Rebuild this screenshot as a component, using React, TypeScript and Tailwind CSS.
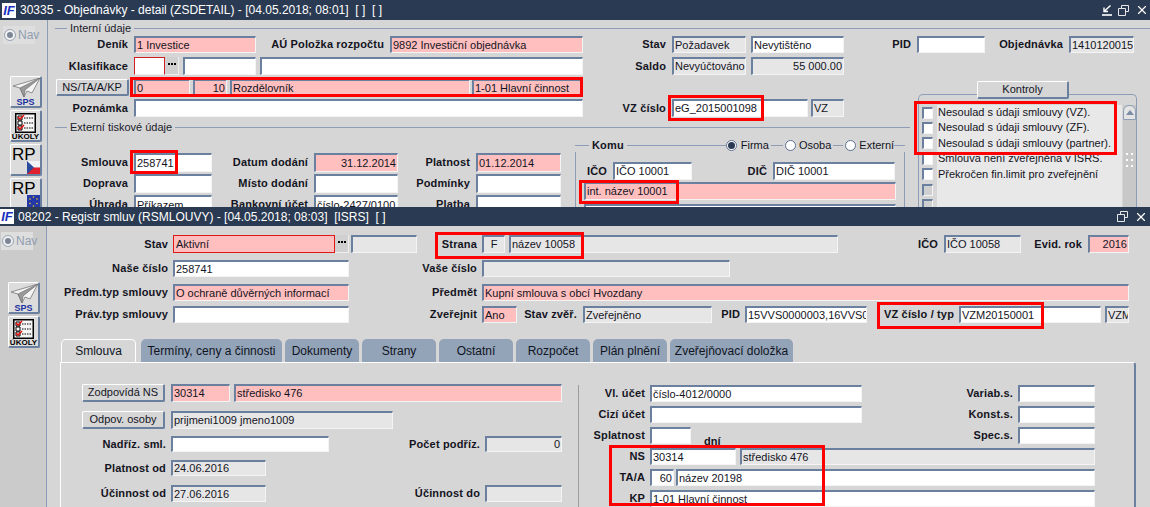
import { X } from 'lucide-react'
import type { ReactNode } from 'react'

type Tone = 'white' | 'pink' | 'grey'

const tones: Record<Tone, string> = {
  white: 'bg-white',
  pink: 'bg-[#ffbfbf]',
  grey: 'bg-[#e6e6e6]',
}

const F = ({
  className,
  tone = 'white',
  right,
  children,
}: {
  className: string
  tone?: Tone
  right?: boolean
  children?: ReactNode
}) => (
  <div
    className={`flex h-full shrink-0 items-center overflow-hidden whitespace-nowrap border-t-2 border-l-2 border-r border-b border-t-[#6b7f9f] border-l-[#6b7f9f] border-r-[#f4f4f4] border-b-[#f4f4f4] px-[1px] leading-none ${tones[tone]} ${right ? 'justify-end' : ''} ${className}`}
  >
    {children}
  </div>
)

const L = ({ className, tight, children }: { className: string; tight?: boolean; children: ReactNode }) => (
  <div className={`shrink-0 whitespace-nowrap text-right font-bold tracking-[0.15px] ${tight ? 'pr-[5px]' : 'pr-[6px]'} ${className}`}>{children}</div>
)

const Btn = ({ className, children }: { className: string; children: ReactNode }) => (
  <div
    className={`flex h-full shrink-0 items-center justify-center rounded-[2px] border-t border-l border-r-2 border-b-2 border-t-white border-l-white border-r-[#6b7f9f] border-b-[#6b7f9f] bg-[#d6d6d6] ${className}`}
  >
    {children}
  </div>
)

const Dots = () => (
  <div className="flex h-full w-[14px] shrink-0 items-center justify-center gap-px border-r border-b border-[#eee] bg-[#d0d0d0] pb-[3px]">
    <i className="size-[2px] bg-black" />
    <i className="size-[2px] bg-black" />
    <i className="size-[2px] bg-black" />
  </div>
)

const Logo = ({ className }: { className: string }) => (
  <div
    className={`flex h-[15px] w-[14px] shrink-0 items-center justify-center bg-white text-[13px] font-bold italic leading-none text-[#1a2fc0] ${className}`}
  >
    IF
  </div>
)

const Title = ({ className, logo, text, controls }: { className: string; logo: string; text: string; controls: ReactNode }) => (
  <div className={`flex shrink-0 items-center bg-[#2a3a52] text-white ${className}`}>
    <Logo className={logo} />
    <div className="ml-[4px] flex-1 whitespace-pre text-[12px] leading-none">{text}</div>
    {controls}
  </div>
)

const Restore = () => (
  <svg width="11" height="11" viewBox="0 0 11 11" fill="none" stroke="#e8e8e8">
    <path d="M3.5 3V.5h7v6H8" />
    <path d="M.5 3.5h7v7h-7z" />
  </svg>
)

const Minimize = () => (
  <svg width="10" height="11" viewBox="0 0 10 11" fill="none" stroke="#fff">
    <path d="M8.5 .5 2 6.5M2 2.5v4h4" strokeWidth="1.4" />
    <path d="M0 10h10" strokeWidth="1.6" />
  </svg>
)

const Nav = () => (
  <div className="flex h-[18px] w-[32px] items-center gap-[3px] bg-[#dedede] pl-[2px]">
    <span className="size-[10px] shrink-0 rounded-full border-2 border-[#f2f2f2] bg-[#7c8696] outline outline-1 outline-[#9aa5b5]" />
    <span className="text-[12px] leading-none text-[#8f9db0]">Nav</span>
  </div>
)

const Tile = ({ children }: { children: ReactNode }) => (
  <div className="relative h-[32px] w-[32px] shrink-0 overflow-hidden rounded-[2px] border-t border-l border-r-2 border-b-2 border-t-white border-l-white border-r-[#6b7f9f] border-b-[#6b7f9f] bg-[#dcdcdc]">
    {children}
  </div>
)

const Sps = () => (
  <Tile>
    <svg className="mx-auto mt-px" width="28" height="20" viewBox="0 0 28 20">
      <path d="M28 0 1 8l7 2 4 9 3-6 5 2z" fill="#f4f4f4" stroke="#777" strokeWidth="0.8" />
      <path d="M28 0 8 10l4 9 1-7z" fill="#9a9a9a" stroke="#666" strokeWidth="0.6" />
    </svg>
    <div className="text-center text-[9px] font-bold leading-[9px] text-[#1a2fa0]">SPS</div>
  </Tile>
)

const Ukoly = () => (
  <Tile>
    <svg className="mx-auto mt-[2px]" width="21" height="20" viewBox="0 0 21 20">
      <rect x="0.75" y="0.75" width="19.5" height="18.5" fill="#f6f6f6" stroke="#000" strokeWidth="1.5" />
      <path d="M3 3h4v4H3zM3 8h4v4H3zM3 13h4v4H3z" fill="#fff" stroke="#000" />
      <path d="M9 5h9M9 10h9M9 15h9" stroke="#000" strokeDasharray="1.5 1" />
      <path d="m3 4 2 2 4-4M3 14l2 2 4-4" fill="none" stroke="#e01010" strokeWidth="1.6" />
    </svg>
    <div className="text-center text-[8px] font-bold leading-[8px] text-black">ÚKOLY</div>
  </Tile>
)

const Rp = ({ children }: { children: ReactNode }) => (
  <Tile>
    <div className="pl-[1px] pt-[1px] text-[17px] leading-[17px] text-black">RP</div>
    <div className="absolute right-0 top-[16px]">{children}</div>
  </Tile>
)

const Tab = ({ className, children }: { className: string; children: ReactNode }) => (
  <div className={`flex h-[23px] shrink-0 items-center justify-center whitespace-nowrap rounded-t-[5px] bg-[#93a3b8] text-[12px] leading-none text-[#10151f] ${className}`}>
    {children}
  </div>
)

const Check = ({ on = true, children }: { on?: boolean; children?: ReactNode }) => (
  <div className="flex h-[15.4px] shrink-0 items-center">
    <span
      className={`mx-[3px] h-[12px] w-[11px] shrink-0 border-t-2 border-l-2 border-r border-b border-t-[#6b7f9f] border-l-[#6b7f9f] border-r-[#f4f4f4] border-b-[#f4f4f4] ${on ? 'bg-white' : 'bg-[#cfcfcf]'}`}
    />
    <span className="ml-[1px] h-full flex-1 whitespace-nowrap bg-[#e8e8e8] pl-[1px] leading-[15px]">{children}</span>
  </div>
)

const Radio = ({ on }: { on?: boolean }) => (
  <span className="flex size-[11px] shrink-0 items-center justify-center rounded-full border border-[#5d7090] bg-white">
    {on ? <i className="size-[7px] rounded-full bg-[#2a3a52]" /> : null}
  </span>
)

const Heading = ({ children }: { children: ReactNode }) => (
  <div className="flex h-[16px] items-center pl-[7px]">
    <span className="h-px w-[12px] bg-[#8d9db5]" />
    <span className="px-[3px] leading-none text-[#1a1a2a]">{children}</span>
    <span className="h-px flex-1 bg-[#8d9db5]" />
  </div>
)

const App = () => {
  return (
    <div className="relative h-[507px] w-[1150px] overflow-hidden bg-[#d6d6d6] font-['Liberation_Sans',Arial,sans-serif] text-[11px] text-[#14141e]">
      {/* okno objednavky */}
      <div className="flex h-[207px] flex-col overflow-hidden">
        <Title
          className="h-[20px]"
          logo="ml-[2px]"
          text="30335 - Objednávky - detail (ZSDETAIL) - [04.05.2018; 08:01]  [ ]  [ ]"
          controls={
            <div className="mr-[1px] flex items-center gap-[6px]">
              <Minimize />
              <Restore />
              <X size={14} strokeWidth={2} color="#fff" />
            </div>
          }
        />
        <div className="flex min-h-0 flex-1 bg-[#d6d6d6]">
          <div className="w-[48px] shrink-0 border-r border-[#8d9db5] pl-[3px] pt-[6px]">
            <Nav />
            <div className="ml-[7px] mt-[32px] flex flex-col gap-[2px]">
              <Sps />
              <Ukoly />
              <Rp>
                <svg width="13" height="13" viewBox="0 0 13 13">
                  <path d="M0 0h13v6.5H0z" fill="#f4f4f4" />
                  <path d="M0 6.5h13V13H0z" fill="#e0202c" />
                  <path d="M0 0l7 6.5L0 13z" fill="#2a4a9c" />
                </svg>
              </Rp>
              <Rp>
                <svg width="13" height="13" viewBox="0 0 13 13">
                  <path d="M0 0h13v13H0z" fill="#2438a8" />
                  <g fill="#f0d020">
                    <circle cx="6.5" cy="2" r="0.8" />
                    <circle cx="10" cy="4" r="0.8" />
                    <circle cx="10" cy="8.5" r="0.8" />
                    <circle cx="6.5" cy="11" r="0.8" />
                    <circle cx="3" cy="8.5" r="0.8" />
                    <circle cx="3" cy="4" r="0.8" />
                  </g>
                </svg>
              </Rp>
            </div>
          </div>
          <div className="min-w-0 flex-1">
            <Heading>Interní údaje</Heading>
            {/* radek 1 */}
            <div className="flex h-[17px] items-center">
              <L className="w-[86px]">Deník</L>
              <F className="w-[122px]" tone="pink">1 Investice</F>
              <L className="w-[134px]">AÚ Položka rozpočtu</L>
              <F className="w-[193px]" tone="pink">9892 Investiční objednávka</F>
              <L className="w-[89px]">Stav</L>
              <F className="w-[74px]" tone="grey">Požadavek</F>
              <F className="ml-[5px] w-[93px]">Nevytištěno</F>
              <L className="w-[73px]">PID</L>
              <F className="w-[68px]" />
              <L className="w-[84px]">Objednávka</L>
              <F className="w-[65px]" tone="grey">1410120015</F>
            </div>
            <div className="flex">
              <div className="w-[867px] shrink-0">
                <div className="mt-[4px] flex h-[18px] items-center">
                  <L className="w-[86px]">Klasifikace</L>
                  <div className="h-full w-[31px] shrink-0 border border-[#d02020] border-b-[#eee] bg-white" />
                  <Dots />
                  <F className="ml-[4px] w-[73px]" />
                  <F className="ml-[4px] w-[323px]" />
                  <L className="w-[89px]">Saldo</L>
                  <F className="w-[74px]" tone="grey">Nevyúčtováno</F>
                  <F className="ml-[5px] w-[93px]" tone="grey" right>55 000.00</F>
                </div>
                <div className="mt-[4px] flex h-[17px] items-center">
                  <Btn className="ml-[8px] w-[73px]">NS/TA/A/KP</Btn>
                  <F className="ml-[5px] w-[56px]" tone="pink">0</F>
                  <F className="ml-[3px] w-[34px]" tone="pink" right>10</F>
                  <F className="ml-[3px] w-[240px]" tone="pink">Rozdělovník</F>
                  <F className="ml-[2px] w-[111px]" tone="pink">1-01 Hlavní činnost</F>
                </div>
                <div className="mt-[3px] flex h-[18px] items-center">
                  <L className="w-[86px]">Poznámka</L>
                  <F className="w-[449px]" />
                  <L className="w-[89px]">VZ číslo</L>
                  <F className="w-[136px]">eG_2015001098</F>
                  <F className="ml-[3px] w-[33px]" tone="grey">VZ</F>
                </div>
                <div className="mt-[2px] pr-[5px]">
                  <Heading>Externí tiskové údaje</Heading>
                </div>
                <div className="flex">
                  <div className="w-[513px] shrink-0 pt-[18px]">
                    <div className="flex h-[19px] items-center">
                      <L className="w-[86px]">Smlouva</L>
                      <F className="w-[78px]">258741</F>
                      <L className="w-[102px]">Datum dodání</L>
                      <F className="w-[84px]" tone="pink" right>31.12.2014</F>
                      <L className="w-[78px]">Platnost</L>
                      <F className="w-[85px]" tone="pink">01.12.2014</F>
                    </div>
                    <div className="mt-[2px] flex h-[19px] items-center">
                      <L className="w-[86px]">Doprava</L>
                      <F className="w-[78px]" />
                      <L className="w-[102px]">Místo dodání</L>
                      <F className="w-[84px]" />
                      <L className="w-[78px]">Podmínky</L>
                      <F className="w-[85px]" />
                    </div>
                    <div className="mt-[2px] flex h-[19px] items-center">
                      <L className="w-[86px]">Úhrada</L>
                      <F className="w-[78px]">Příkazem</F>
                      <L className="w-[102px]">Bankovní účet</L>
                      <F className="w-[84px]">číslo-2427/0100</F>
                      <L className="w-[78px]">Platba</L>
                      <F className="w-[85px]" />
                    </div>
                  </div>
                  {/* Komu */}
                  <div className="ml-[14px] w-[330px] shrink-0 pt-[3px]">
                    <div className="flex h-[14px] items-center">
                      <span className="h-px w-[14px] self-center bg-[#8d9db5]" />
                      <span className="px-[3px] font-bold leading-none tracking-[0.15px]">Komu</span>
                      <span className="h-px w-[99px] bg-[#8d9db5]" />
                      <Radio on />
                      <span className="ml-[4px] leading-none">Firma</span>
                      <span className="mx-[2px] h-px w-[12px] bg-[#8d9db5]" />
                      <Radio />
                      <span className="ml-[3px] leading-none">Osoba</span>
                      <span className="mx-[2px] h-px w-[10px] bg-[#8d9db5]" />
                      <Radio />
                      <span className="ml-[3px] leading-none">Externí</span>
                      <span className="h-px flex-1 bg-[#8d9db5]" />
                    </div>
                    <div className="h-[60px] border-l border-r border-[#8d9db5] px-[8px] pt-[10px]">
                      <div className="flex h-[18px] items-center">
                        <L className="w-[29px]">IČO</L>
                        <F className="w-[79px]">IČO 10001</F>
                        <L className="w-[81px]">DIČ</L>
                        <F className="w-[122px]">DIČ 10001</F>
                      </div>
                      <div className="mt-[2px] h-[18px]">
                        <F className="w-[312px]" tone="pink">int. název 10001</F>
                      </div>
                      <div className="mt-[4px] flex h-[18px]">
                        <F className="w-[312px]" />
                      </div>
                    </div>
                  </div>
                </div>
              </div>
              {/* Kontroly */}
              <div className="flex w-[223px] shrink-0 flex-col pt-[28px]">
                <Btn className="relative z-10 ml-[62px] !h-[18px] w-[92px]">Kontroly</Btn>
                <div className="ml-[3px] -mt-[5px] flex h-[120px] w-[219px] shrink-0 flex-col rounded-t-[5px] border-l border-r border-t border-[#8d9db5]">
                  <div className="mt-[10px] flex min-h-0 flex-1">
                    <div className="flex min-w-0 flex-1 flex-col">
                      <Check>Nesoulad s údaji smlouvy (VZ).</Check>
                      <Check>Nesoulad s údaji smlouvy (ZF).</Check>
                      <Check>Nesoulad s údaji smlouvy (partner).</Check>
                      <Check>Smlouva není zveřejněna v ISRS.</Check>
                      <Check>Překročen fin.limit pro zveřejnění</Check>
                      <Check on={false} />
                      <Check on={false} />
                    </div>
                    <div className="ml-[1px] flex w-[13px] shrink-0 flex-col bg-[#c8c8c8]">
                      <div className="flex h-[15px] items-center justify-center rounded-t-[6px] border border-[#8d9db5] bg-[#e4e4e4]">
                        <span className="border-x-[4px] border-b-[5px] border-x-transparent border-b-[#7c8da8]" />
                      </div>
                      <div className="mt-[33px] grid grid-cols-2 justify-items-center gap-y-[4px] px-[2px]">
                        <i className="size-[2px] bg-white" />
                        <i className="size-[2px] bg-white" />
                        <i className="size-[2px] bg-white" />
                        <i className="size-[2px] bg-white" />
                        <i className="size-[2px] bg-white" />
                        <i className="size-[2px] bg-white" />
                      </div>
                    </div>
                  </div>
                </div>
              </div>
            </div>
          </div>
        </div>
      </div>

      {/* okno registr smluv */}
      <div className="flex h-[300px] flex-col overflow-hidden">
        <Title
          className="h-[19px]"
          logo=""
          text="08202 - Registr smluv (RSMLOUVY) - [04.05.2018; 08:03]  [ISRS]  [ ]"
          controls={
            <div className="mr-[2px] flex items-center gap-[6px]">
              <Restore />
              <X size={14} strokeWidth={2} color="#fff" />
            </div>
          }
        />
        <div className="flex min-h-0 flex-1">
          <div className="w-[47px] shrink-0 border-r border-[#8d9db5] bg-[#cbcbcb] pl-px pt-[6px]">
            <Nav />
            <div className="ml-[7px] mt-[32px] flex flex-col gap-[2px]">
              <Sps />
              <Ukoly />
            </div>
          </div>
          <div className="min-w-0 flex-1 pl-px">
            <div className="mt-[9px] flex h-[18px] items-center">
              <L className="w-[125px]" tight>Stav</L>
              <div className="flex h-full w-[162px] shrink-0 items-center border border-[#e01818] bg-[#ffbfbf] pl-[2px]">
                Aktivní
              </div>
              <Dots />
              <F className="ml-[2px] w-[66px]" tone="grey" />
              <L className="w-[65px]" tight>Strana</L>
              <F className="w-[23px] justify-center" tone="grey">F</F>
              <F className="ml-[4px] w-[329px]" tone="grey">název 10058</F>
              <L className="w-[106px]">IČO</L>
              <F className="w-[77px]" tone="grey">IČO 10058</F>
              <L className="w-[67px]">Evid. rok</L>
              <F className="w-[41px]" tone="pink" right>2016</F>
            </div>
            <div className="mt-[7px] flex h-[17px] items-center">
              <L className="w-[125px]" tight>Naše číslo</L>
              <F className="w-[176px]">258741</F>
              <L className="w-[133px]" tight>Vaše číslo</L>
              <F className="w-[248px]" tone="grey" />
            </div>
            <div className="mt-[7px] flex h-[17px] items-center">
              <L className="w-[125px]" tight>Předm.typ smlouvy</L>
              <F className="w-[176px]" tone="pink">O ochraně důvěrných informací</F>
              <L className="w-[133px]" tight>Předmět</L>
              <F className="w-[647px]" tone="pink">Kupní smlouva s obcí Hvozdany</F>
            </div>
            <div className="mt-[5px] flex h-[17px] items-center">
              <L className="w-[125px]" tight>Práv.typ smlouvy</L>
              <F className="w-[176px]" />
              <L className="w-[133px]" tight>Zveřejnit</L>
              <F className="w-[35px]" tone="pink">Ano</F>
              <L className="w-[66px]">Stav zvěř.</L>
              <F className="w-[129px]" tone="grey">Zveřejněno</F>
              <L className="w-[33px]" tight>PID</L>
              <F className="w-[122px]">15VVS0000003,16VVS0</F>
              <L className="w-[92px]" tight>VZ číslo / typ</L>
              <F className="w-[142px]">VZM20150001</F>
              <F className="ml-[4px] w-[24px]" tone="grey">VZM</F>
            </div>

            {/* zalozky */}
            <div className="ml-[13px] mt-[16px] flex gap-[3px]">
              <Tab className="mr-[2px] w-[75px] border-t border-l border-r border-white !bg-[#d6d6d6]">Smlouva</Tab>
              <Tab className="w-[141px]">Termíny, ceny a činnosti</Tab>
              <Tab className="w-[74px]">Dokumenty</Tab>
              <Tab className="w-[74px]">Strany</Tab>
              <Tab className="w-[74px]">Ostatní</Tab>
              <Tab className="w-[74px]">Rozpočet</Tab>
              <Tab className="w-[74px]">Plán plnění</Tab>
              <Tab className="w-[123px]">Zveřejňovací doložka</Tab>
            </div>
            <div className="ml-[12px] flex h-[145px] w-[1076px] rounded-tr-[3px] border-t border-l border-r-2 border-t-white border-l-white border-r-[#6b7f9f]">
              {/* levy sloupec */}
              <div className="w-[517px] shrink-0 pt-[21px]">
                <div className="flex h-[18px] items-center">
                  <Btn className="ml-[21px] w-[83px]">Zodpovídá NS</Btn>
                  <F className="ml-[6px] w-[59px]" tone="pink">30314</F>
                  <F className="ml-[4px] w-[328px]" tone="pink">středisko 476</F>
                </div>
                <div className="mt-[9px] flex h-[18px] items-center">
                  <Btn className="ml-[21px] w-[83px]">Odpov. osoby</Btn>
                  <F className="ml-[6px] w-[222px]" tone="grey">prijmeni1009 jmeno1009</F>
                </div>
                <div className="mt-[7px] flex h-[16px] items-center">
                  <L className="w-[110px]" tight>Nadříz. sml.</L>
                  <F className="w-[158px]" />
                  <L className="w-[156px]" tight>Počet podříz.</L>
                  <F className="w-[77px]" tone="grey" right>0</F>
                </div>
                <div className="mt-[8px] flex h-[16px] items-center">
                  <L className="w-[110px]" tight>Platnost od</L>
                  <F className="w-[95px]" tone="grey">24.06.2016</F>
                </div>
                <div className="mt-[9px] flex h-[17px] items-center">
                  <L className="w-[110px]" tight>Účinnost od</L>
                  <F className="w-[95px]" tone="grey">27.06.2016</F>
                  <L className="w-[219px]" tight>Účinnost do</L>
                  <F className="w-[77px]" tone="grey" />
                </div>
              </div>
              <div className="mt-[22px] w-px shrink-0 bg-[#9c9c9c]" />
              {/* pravy sloupec */}
              <div className="min-w-0 flex-1 pt-[22px]">
                <div className="flex h-[17px] items-center">
                  <L className="w-[71px]" tight>Vl. účet</L>
                  <F className="w-[212px]">číslo-4012/0000</F>
                  <L className="w-[156px]" tight>Variab.s.</L>
                  <F className="w-[77px]" />
                </div>
                <div className="mt-[4px] flex h-[17px] items-center">
                  <L className="w-[71px]" tight>Cizí účet</L>
                  <F className="w-[212px]" />
                  <L className="w-[156px]" tight>Konst.s.</L>
                  <F className="w-[77px]" />
                </div>
                <div className="mt-[4px] flex h-[17px] items-center">
                  <L className="w-[71px]" tight>Splatnost</L>
                  <F className="w-[41px]" />
                  <span className="ml-[13px] mt-[12px] w-[158px] font-bold leading-none">dní</span>
                  <L className="w-[156px]" tight>Spec.s.</L>
                  <F className="w-[77px]" />
                </div>
                <div className="mt-[4px] flex h-[17px] items-center">
                  <L className="w-[71px]" tight>NS</L>
                  <F className="w-[86px]">30314</F>
                  <F className="ml-[4px] w-[355px]" tone="grey">středisko 476</F>
                </div>
                <div className="mt-[4px] flex h-[17px] items-center">
                  <L className="w-[71px]" tight>TA/A</L>
                  <F className="w-[24px]" right>60</F>
                  <F className="ml-[2px] w-[419px]">název 20198</F>
                </div>
                <div className="mt-[4px] flex h-[17px] items-center">
                  <L className="w-[71px]" tight>KP</L>
                  <F className="w-[445px]">1-01 Hlavní činnost</F>
                </div>
              </div>
            </div>
          </div>
        </div>
      </div>

      {/* cervene ramecky */}
      <div className="pointer-events-none absolute left-[130px] top-[77px] h-[20px] w-[453px] border-[3px] border-[#f00]" />
      <div className="pointer-events-none absolute left-[668px] top-[95px] h-[26px] w-[96px] border-[3px] border-[#f00]" />
      <div className="pointer-events-none absolute left-[130px] top-[150px] h-[24px] w-[48px] border-[3px] border-[#f00]" />
      <div className="pointer-events-none absolute left-[579px] top-[180px] h-[24px] w-[100px] border-[3px] border-[#f00]" />
      <div className="pointer-events-none absolute left-[914px] top-[101px] h-[54px] w-[203px] border-[3px] border-[#f00]" />
      <div className="pointer-events-none absolute left-[435px] top-[232px] h-[27px] w-[149px] border-[3px] border-[#f00]" />
      <div className="pointer-events-none absolute left-[877px] top-[302px] h-[27px] w-[167px] border-[3px] border-[#f00]" />
      <div className="pointer-events-none absolute left-[609px] top-[445px] h-[61px] w-[216px] border-[3px] border-[#f00]" />
    </div>
  )
}

export default App
